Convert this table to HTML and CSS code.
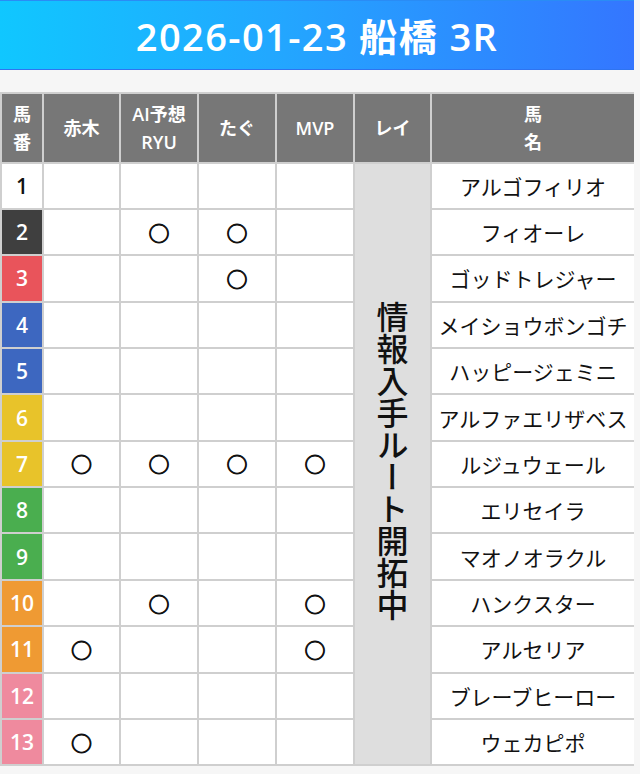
FILE: index.html
```html
<!DOCTYPE html>
<html lang="ja">
<head>
<meta charset="utf-8">
<title>2026-01-23 船橋 3R</title>
<link rel="stylesheet" href="styles.css">
</head>
<body>
<div class="page">
  <h1 class="title">2026-01-23 船橋 3R</h1>
  <div class="table-wrap">
    <table class="grid">
      <colgroup>
        <col class="c-num"><col class="c-pick"><col class="c-pick2"><col class="c-pick2"><col class="c-pick2"><col class="c-rei"><col class="c-name">
      </colgroup>
      <thead>
        <tr><th>馬<br>番</th><th>赤木</th><th>AI予想<br>RYU</th><th>たぐ</th><th>MVP</th><th>レイ</th><th>馬<br>名</th></tr>
      </thead>
      <tbody>
        <tr><td class="num n1">1</td><td></td><td></td><td></td><td></td><td class="rei" rowspan="13"><span class="vtext">情報入手ルート開拓中</span></td><td class="name">アルゴフィリオ</td></tr>
        <tr><td class="num n2">2</td><td></td><td class="mark">○</td><td class="mark">○</td><td></td><td class="name">フィオーレ</td></tr>
        <tr><td class="num n3">3</td><td></td><td></td><td class="mark">○</td><td></td><td class="name">ゴッドトレジャー</td></tr>
        <tr><td class="num n4">4</td><td></td><td></td><td></td><td></td><td class="name">メイショウボンゴチ</td></tr>
        <tr><td class="num n4">5</td><td></td><td></td><td></td><td></td><td class="name">ハッピージェミニ</td></tr>
        <tr><td class="num n5">6</td><td></td><td></td><td></td><td></td><td class="name">アルファエリザベス</td></tr>
        <tr><td class="num n5">7</td><td class="mark">○</td><td class="mark">○</td><td class="mark">○</td><td class="mark">○</td><td class="name">ルジュウェール</td></tr>
        <tr><td class="num n6">8</td><td></td><td></td><td></td><td></td><td class="name">エリセイラ</td></tr>
        <tr><td class="num n6">9</td><td></td><td></td><td></td><td></td><td class="name">マオノオラクル</td></tr>
        <tr><td class="num n7">10</td><td></td><td class="mark">○</td><td></td><td class="mark">○</td><td class="name">ハンクスター</td></tr>
        <tr><td class="num n7">11</td><td class="mark">○</td><td></td><td></td><td class="mark">○</td><td class="name">アルセリア</td></tr>
        <tr><td class="num n8">12</td><td></td><td></td><td></td><td></td><td class="name">ブレーブヒーロー</td></tr>
        <tr><td class="num n8">13</td><td class="mark">○</td><td></td><td></td><td></td><td class="name">ウェカピポ</td></tr>
      </tbody>
    </table>
  </div>
</div>
</body>
</html>
```

FILE: styles.css
```css
html, body {
  margin: 0;
  padding: 0;
}

body {
  background: #f6f6f6;
  font-family: "Noto Sans CJK JP", "Noto Sans", sans-serif;
  color: #111;
}

.page {
  width: 634px;
}

.title {
  margin: 0;
  height: 68px;
  border-top: 1px solid #2a8cf5;
  border-bottom: 1px solid #2f74f0;
  background: linear-gradient(90deg, #10c7ff 0%, #23a6ff 45%, #3476ff 100%);
  color: #fff;
  font-family: "Open Sans", "Noto Sans CJK JP", sans-serif;
  font-size: 38px;
  font-weight: 600;
  letter-spacing: 1.4px;
  line-height: 70px;
  text-align: center;
}

.table-wrap {
  margin-top: 22px;
  width: 634px;
  overflow: hidden;
}

.grid {
  table-layout: fixed;
  width: 636px;
  border-collapse: separate;
  border-spacing: 2px;
  background: #cfcfcf;
}

.c-num { width: 40px; }
.c-pick { width: 75px; }
.c-pick2 { width: 76px; }
.c-rei { width: 75px; }
.c-name { width: 202px; }

.grid th {
  height: 67.6px;
  padding: 0;
  background: #777;
  color: #fff;
  font-family: "Open Sans", "Noto Sans CJK JP", sans-serif;
  font-size: 18px;
  font-weight: 600;
  line-height: 28px;
  text-align: center;
  vertical-align: middle;
}

.grid td {
  height: 44.36px;
  padding: 0;
  background: #fff;
  text-align: center;
  vertical-align: middle;
}

.num {
  font-family: "Open Sans", "Noto Sans", sans-serif;
  font-size: 21px;
  font-weight: 600;
  color: #fff;
}

.n1 { background: #fff !important; color: #111; }
.n2 { background: #3f3f3f !important; }
.n3 { background: #e9545b !important; }
.n4 { background: #3d67c0 !important; }
.n5 { background: #e8c32a !important; }
.n6 { background: #4aae4f !important; }
.n7 { background: #ef9a33 !important; }
.n8 { background: #ef8a9e !important; }

.mark {
  font-size: 21px;
  font-weight: 700;
  line-height: 1;
  -webkit-text-stroke: 0.9px #111;
}

.name {
  font-size: 21px;
  font-weight: 400;
  white-space: nowrap;
}

.grid td.rei {
  background: #dedede;
}

.vtext {
  writing-mode: vertical-rl;
  text-orientation: upright;
  font-size: 32px;
  font-weight: 500;
  line-height: 1;
  color: #111;
}
```
